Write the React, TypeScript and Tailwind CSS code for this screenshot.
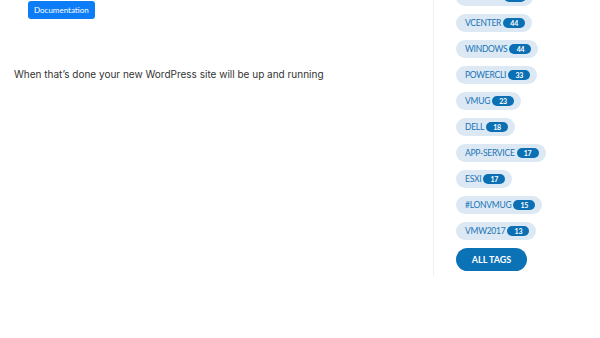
import React from "react";

const tags: { name: string; count: number }[] = [
  { name: "VMWARE", count: 52 },
  { name: "VCENTER", count: 44 },
  { name: "WINDOWS", count: 44 },
  { name: "POWERCLI", count: 33 },
  { name: "VMUG", count: 23 },
  { name: "DELL", count: 18 },
  { name: "APP-SERVICE", count: 17 },
  { name: "ESXI", count: 17 },
  { name: "#LONVMUG", count: 15 },
  { name: "VMW2017", count: 13 },
];

const TagPill = ({ name, count }: { name: string; count: number }) => (
  <a
    href="#"
    className="flex items-center h-[18px] pl-[9px] pr-[7px] rounded-full bg-[#dce9f4] text-[#1a73b4] text-[8.5px] leading-none tracking-[-0.03em]"
  >
    <span>{name}</span>
    <span className="ml-[2px] flex items-center justify-center h-[10px] min-w-[22px] px-[5px] rounded-full bg-[#0b6fb3] text-white text-[7px] font-bold">
      {count}
    </span>
  </a>
);

export default function App() {
  return (
    <div
      className="w-[600px] h-[338px] overflow-hidden bg-white flex items-start"
      style={{ fontFamily: "Lato, 'Open Sans', sans-serif" }}
    >
      {/* Article body */}
      <main className="w-[433px] shrink-0 pl-[14px] flex flex-col items-start">
        <a
          href="#"
          className="mt-[1px] ml-[14px] flex items-center h-[18px] px-[6px] rounded-[3px] bg-[#0d7df7] text-white text-[8px] leading-none"
        >
          Documentation
        </a>
        <p
          className="mt-[48px] text-[10px] text-[#333] leading-[14px]"
          style={{ fontFamily: "Inter, Lato, sans-serif" }}
        >
          When that’s done your new WordPress site will be up and running
        </p>
      </main>

      {/* Tag sidebar */}
      <aside className="h-[288px] border-l border-[#f0f0f0] pl-[22px] -mt-[12px]">
        <div className="flex flex-col items-start gap-[8px]">
          {tags.map((t) => (
            <TagPill key={t.name} name={t.name} count={t.count} />
          ))}
        </div>
        <a
          href="#"
          className="mt-[8px] flex items-center justify-center w-[71px] h-[23px] rounded-full bg-[#0b72b5] text-white text-[9px] font-bold"
        >
          ALL TAGS
        </a>
      </aside>
    </div>
  );
}
